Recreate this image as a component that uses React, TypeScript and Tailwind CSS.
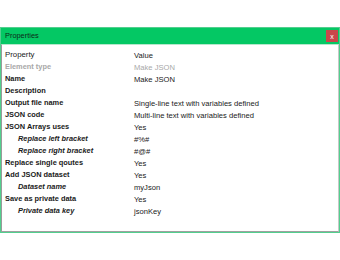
const rows: { label: string; value: string; kind: "head" | "muted" | "bold" | "sub" }[] = [
  { label: "Property", value: "Value", kind: "head" },
  { label: "Element type", value: "Make JSON", kind: "muted" },
  { label: "Name", value: "Make JSON", kind: "bold" },
  { label: "Description", value: "", kind: "bold" },
  { label: "Output file name", value: "Single-line text with variables defined", kind: "bold" },
  { label: "JSON code", value: "Multi-line text with variables defined", kind: "bold" },
  { label: "JSON Arrays uses", value: "Yes", kind: "bold" },
  { label: "Replace left bracket", value: "#%#", kind: "sub" },
  { label: "Replace right bracket", value: "#@#", kind: "sub" },
  { label: "Replace single qoutes", value: "Yes", kind: "bold" },
  { label: "Add JSON dataset", value: "Yes", kind: "bold" },
  { label: "Dataset name", value: "myJson", kind: "sub" },
  { label: "Save as private data", value: "Yes", kind: "bold" },
  { label: "Private data key", value: "jsonKey", kind: "sub" },
];

export default function App() {
  return (
    <div className="w-[340px] h-[260px] bg-white pt-[27px] font-['Liberation_Sans',sans-serif] text-[#1a1a1a]">
      {/* Window */}
      <div className="h-[206px] border border-[#52cf8e] flex flex-col">
        {/* Title bar */}
        <div className="h-[16px] bg-[#04c864] flex items-center justify-between pl-[4px] pr-[1px]">
          <span className="text-[7.4px] text-[#0d2a18]">Properties</span>
          <div className="w-[12px] h-[12px] bg-[#c9474b] flex items-center justify-center text-white text-[7px] leading-none">
            x
          </div>
        </div>

        {/* Grid */}
        <div className="flex-1 border-t border-[#b5e8cc] border-l border-l-[#9a9a9a] border-r border-r-[#c8c8c8] border-b border-b-[#a0a0a0] bg-white pt-[4px]">
          {rows.map((r) => (
            <div key={r.label} className="flex h-[12px] items-center">
              <div
                className={
                  "w-[132px] shrink-0 text-[7.4px] " +
                  (r.kind === "sub" ? "pl-[16px] font-bold italic" : "pl-[3px]") +
                  (r.kind === "bold" ? " font-bold" : "") +
                  (r.kind === "muted" ? " text-[#a8a8a8] font-bold" : "") +
                  (r.kind === "head" ? " text-[7.8px]" : "")
                }
              >
                {r.label}
              </div>
              <div className={"pt-[1px] text-[7.6px] " + (r.kind === "muted" ? "text-[#a8a8a8]" : "")}>{r.value}</div>
            </div>
          ))}
        </div>
      </div>
    </div>
  );
}
